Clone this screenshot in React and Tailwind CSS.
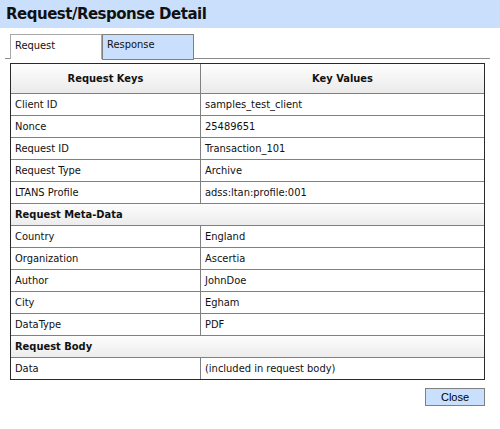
import React from "react";

const rows = [
  { k: "Client ID", v: "samples_test_client" },
  { k: "Nonce", v: "25489651" },
  { k: "Request ID", v: "Transaction_101" },
  { k: "Request Type", v: "Archive" },
  { k: "LTANS Profile", v: "adss:ltan:profile:001" },
  { section: "Request Meta-Data" },
  { k: "Country", v: "England" },
  { k: "Organization", v: "Ascertia" },
  { k: "Author", v: "JohnDoe" },
  { k: "City", v: "Egham" },
  { k: "DataType", v: "PDF" },
  { section: "Request Body" },
  { k: "Data", v: "(included in request body)" },
];

export default function App() {
  return (
    <div
      className="w-[500px] h-[429px] bg-white text-[#111] text-[11px]"
      style={{ fontFamily: '"DejaVu Sans Condensed", "DejaVu Sans", sans-serif' }}
    >
      <div className="h-[28px] bg-[#cadffb] flex items-center pl-[6px]">
        <h1
          className="text-[15px] font-bold text-[#111] leading-none tracking-[-0.5px]"
          style={{ fontFamily: '"DejaVu Sans", Verdana, sans-serif' }}
        >
          Request/Response Detail
        </h1>
      </div>

      <div className="pt-[6px] pl-[5px] pr-[10px]">
        <div className="flex items-end border-b border-[#8a8a8a] h-[25px] pl-[5px]">
          <div className="w-[92px] h-[25px] -mb-px bg-white border border-b-0 border-[#a8a8a8] pl-[4px] pt-[4px] leading-[14px]">
            Request
          </div>
          <div className="w-[92px] h-[26px] -mb-[2px] bg-[#cadffb] border border-[#808080] pl-[4px] pt-[3px] leading-[14px]">
            Response
          </div>
        </div>
      </div>

      <div className="pl-[10px] pt-[4px]">
        <div className="w-[475px] border border-[#2a2a2a]">
          <div className="flex h-[29px] pt-[2px] bg-gradient-to-b from-[#fefefe] to-[#ebeaea] font-bold">
            <div className="w-[189px] flex items-center justify-center">Request Keys</div>
            <div className="flex-1 border-l border-[#808080] -mt-[2px] pt-[2px] flex items-center justify-center">
              Key Values
            </div>
          </div>
          {rows.map((r, i) =>
            r.section ? (
              <div
                key={i}
                className="h-[22px] pt-[2px] border-t border-[#808080] bg-gradient-to-b from-[#fdfdfd] to-[#ececec] font-bold flex items-center pl-[4px]"
              >
                {r.section}
              </div>
            ) : (
              <div key={i} className="h-[22px] border-t border-[#808080] flex">
                <div className="w-[189px] flex items-center pl-[4px] pt-[2px]">{r.k}</div>
                <div className="flex-1 border-l border-[#808080] flex items-center pl-[4px] pt-[2px]">
                  {r.v}
                </div>
              </div>
            )
          )}
        </div>
      </div>

      <div className="flex justify-end pr-[15px] pt-[8px]">
        <button
          className="w-[60px] h-[18px] bg-[#cadffb] border border-[#808080] text-[11px] text-black leading-none"
          style={{ fontFamily: '"Liberation Sans", Arial, sans-serif' }}
        >
          Close
        </button>
      </div>
    </div>
  );
}
